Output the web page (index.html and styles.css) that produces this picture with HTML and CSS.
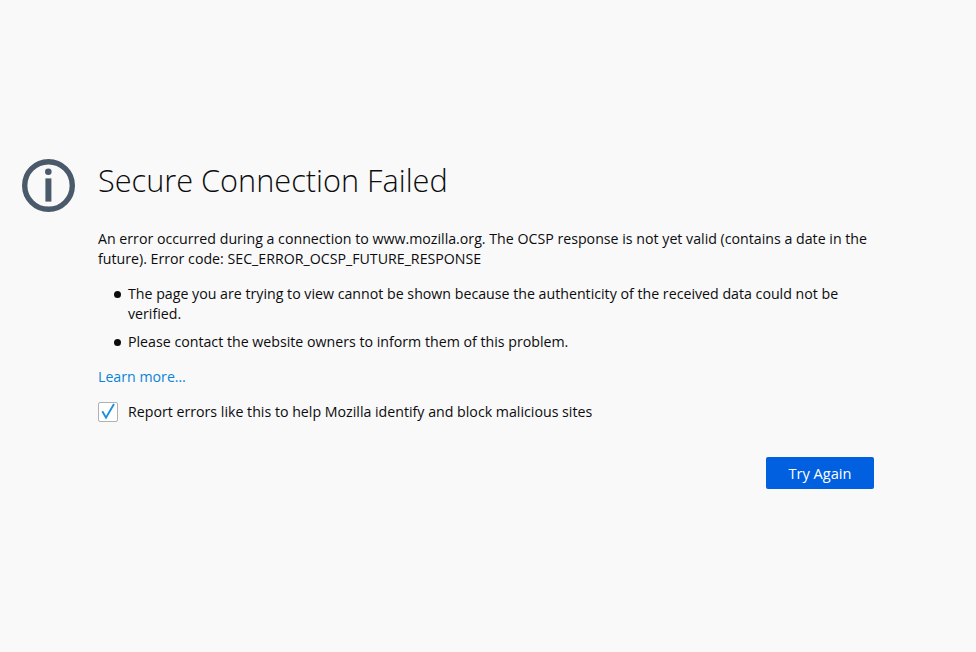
FILE: index.html
```html
<!DOCTYPE html>
<html lang="en">
<head>
<meta charset="UTF-8">
<meta name="viewport" content="width=device-width, initial-scale=1.0">
<title>Secure Connection Failed</title>
<link rel="stylesheet" href="styles.css">
</head>
<body>

<div class="errorPage">
    <svg class="errorIcon" viewBox="0 0 53 53" aria-hidden="true">
        <circle cx="26.5" cy="26.5" r="23.8" fill="none" stroke="#4a5a6b" stroke-width="5.4"/>
        <circle cx="26.3" cy="12.8" r="3.3" fill="#4a5a6b"/>
        <rect x="23.4" y="19.4" width="6" height="23.2" fill="#4a5a6b"/>
    </svg>

    <div class="errorContent">
        <h1 class="errorTitle">Secure Connection Failed</h1>

        <p class="errorText">An error occurred during a connection to www.mozilla.org. The OCSP response is not yet valid (contains a date in the future). Error code: SEC_ERROR_OCSP_FUTURE_RESPONSE</p>

        <ul class="errorList">
            <li>The page you are trying to view cannot be shown because the authenticity of the received data could not be verified.</li>
            <li>Please contact the website owners to inform them of this problem.</li>
        </ul>

        <a class="learnMore" href="#">Learn more…</a>

        <label class="reportRow">
            <span class="reportBox">
                <svg viewBox="0 0 18 18" aria-hidden="true">
                    <path d="M3.3 8.2 L7 14.7 L15 1" fill="none" stroke="#1a8fdc" stroke-width="1.9"/>
                </svg>
            </span>
            Report errors like this to help Mozilla identify and block malicious sites
        </label>

        <div class="buttonRow">
            <button class="tryAgain">Try Again</button>
        </div>
    </div>
</div>

</body>
</html>
```

FILE: styles.css
```css
html, body {
    margin: 0;
    height: 100%;
}

body {
    background-color: #f9f9fa;
    color: #0c0c0d;
    font-family: "Open Sans", "Noto Sans", sans-serif;
    font-size: 14.2px;
    overflow: hidden;
}

.errorPage {
    display: flex;
    align-items: flex-start;
    gap: 23px;
    padding: 159px 0 0 22px;
}

.errorIcon {
    width: 53px;
    height: 53px;
    flex: none;
}

.errorContent {
    width: 776px;
}

.errorTitle {
    margin: 0;
    padding-top: 1px;
    font-size: 30.7px;
    font-weight: 300;
    line-height: 41px;
    color: #0c0c0d;
}

.errorText {
    margin: 28px 0 0;
    line-height: 20px;
}

.errorList {
    margin: 15px 0 0;
    padding: 0 0 0 30px;
    line-height: 20px;
    list-style: none;
}

.errorList li {
    display: flex;
    align-items: flex-start;
}

.errorList li + li {
    margin-top: 8px;
}

.errorList li::before {
    content: "";
    flex: none;
    width: 7px;
    height: 7px;
    margin: 7px 7px 0 -14px;
    border-radius: 50%;
    background-color: #0c0c0d;
}

.learnMore {
    display: block;
    margin-top: 15px;
    line-height: 20px;
    color: #0a84d8;
    text-decoration: none;
}

.reportRow {
    display: flex;
    align-items: center;
    gap: 10px;
    margin-top: 15px;
    line-height: 20px;
}

.reportBox {
    display: block;
    width: 20px;
    height: 20px;
    box-sizing: border-box;
    border: 1px solid #b1b1b3;
    border-radius: 2px;
    background-color: #fff;
}

.reportBox svg {
    display: block;
    width: 18px;
    height: 18px;
}

.buttonRow {
    display: flex;
    justify-content: flex-end;
    margin-top: 35px;
}

.tryAgain {
    width: 108px;
    height: 32px;
    padding: 0;
    border: none;
    border-radius: 2px;
    background-color: #0060df;
    color: #fff;
    font-family: inherit;
    font-size: 14.6px;
}
```
